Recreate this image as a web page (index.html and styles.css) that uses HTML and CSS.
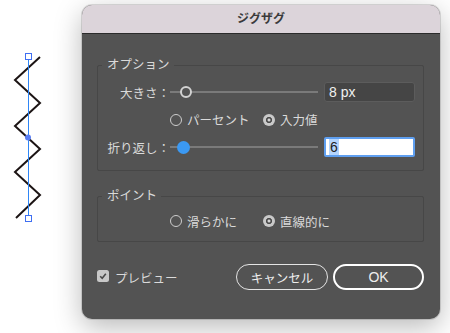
FILE: index.html
```html
<!DOCTYPE html>
<html lang="ja">
<head>
    <meta charset="UTF-8">
    <title>ジグザグ</title>
    <link rel="stylesheet" href="styles.css">
</head>
<body>
<div class="stage">

    <!-- artwork being edited: zigzag path with its selection handles -->
    <svg class="artwork" width="82" height="333" viewBox="0 0 82 333">
        <polyline points="40,57 15,80 40,103 15,126 40,149 15,172 40,195 16,218"
                  fill="none" stroke="#1c1414" stroke-width="2"/>
        <line x1="28.5" y1="59" x2="28.5" y2="216" stroke="#2f86f6" stroke-width="1"/>
        <rect x="25.5" y="53.5" width="6" height="6" fill="#fff" stroke="#3f6ff2"/>
        <rect x="25.5" y="215.5" width="6" height="6" fill="#fff" stroke="#3f6ff2"/>
        <circle cx="28" cy="137.5" r="3" fill="#5b7ff4"/>
    </svg>

    <div class="dialog">
        <div class="titlebar">ジグザグ</div>

        <div class="dialog-body">
            <fieldset class="group">
                <legend>オプション</legend>
                <div class="rows">
                    <div class="row">
                        <span class="label">大きさ：</span>
                        <div class="slider"><span class="knob hollow"></span></div>
                        <div class="field">8 px</div>
                    </div>
                    <div class="row radios">
                        <label class="radio"><span class="dot"></span>パーセント</label>
                        <label class="radio"><span class="dot checked"></span>入力値</label>
                    </div>
                    <div class="row">
                        <span class="label">折り返し：</span>
                        <div class="slider"><span class="knob active"></span></div>
                        <div class="field focused"><span class="selected">6</span></div>
                    </div>
                </div>
            </fieldset>

            <fieldset class="group points">
                <legend>ポイント</legend>
                <div class="row radios">
                    <label class="radio"><span class="dot"></span>滑らかに</label>
                    <label class="radio"><span class="dot checked"></span>直線的に</label>
                </div>
            </fieldset>

            <div class="footer">
                <label class="check">
                    <span class="box">
                        <svg width="12" height="12" viewBox="0 0 12 12">
                            <polyline points="3.2,6.2 5.2,8.2 8.8,3.8" fill="none" stroke="#4a4a4a" stroke-width="1.6"/>
                        </svg>
                    </span>
                    プレビュー
                </label>
                <div class="buttons">
                    <button class="btn">キャンセル</button>
                    <button class="btn primary">OK</button>
                </div>
            </div>
        </div>
    </div>
</div>
</body>
</html>
```

FILE: styles.css
```css
* {
    box-sizing: border-box;
}

body {
    margin: 0;
    background: #fff;
    font-family: "Liberation Sans", "Noto Sans CJK JP", sans-serif;
    font-size: 12.5px;
    color: #dadada;
    overflow: hidden;
}

.stage {
    display: flex;
    align-items: flex-start;
    width: 450px;
    height: 333px;
}

.artwork {
    display: block;
    flex: none;
}

.dialog {
    margin-top: 5px;
    width: 358px;
    border-radius: 10px;
    background: #535353;
    box-shadow: 0 0 0 1px rgba(0, 0, 0, 0.12), 0 8px 28px rgba(0, 0, 0, 0.28);
    overflow: hidden;
}

.titlebar {
    height: 29px;
    background: #dcd4da;
    border-bottom: 1px solid #2b2b2b;
    text-align: center;
    font-size: 12px;
    font-weight: bold;
    line-height: 28px;
    color: #3a3a3a;
}

.dialog-body {
    padding: 23px 16px 29px 15px;
}

.group {
    margin: 0;
    min-width: 0;
    padding: 9px 8px 13px 0;
    border: 1px solid #474747;
    border-radius: 2px;
}

.group legend {
    margin-left: 4px;
    padding: 0 4px 0 5px;
    line-height: 16px;
}

.group.points {
    margin-top: 17px;
    padding: 7px 8px 10px 0;
}

.rows {
    display: flex;
    flex-direction: column;
    gap: 7.5px;
}

.row {
    display: flex;
    align-items: center;
    height: 20px;
}

.label {
    width: 72px;
    text-align: right;
    white-space: nowrap;
}

.slider {
    position: relative;
    width: 148px;
    height: 20px;
}

.slider::before {
    content: "";
    position: absolute;
    left: 0;
    right: 0;
    top: 9px;
    height: 2px;
    background: #7a7a7a;
}

.knob {
    position: absolute;
    border-radius: 50%;
}

.knob.hollow {
    left: 10px;
    top: 4px;
    width: 12px;
    height: 12px;
    border: 2px solid #d2d2d2;
    background: #535353;
}

.knob.active {
    left: 6.5px;
    top: 3.5px;
    width: 13px;
    height: 13px;
    background: #3b99f3;
}

.field {
    margin-left: 6px;
    width: 91px;
    height: 20px;
    padding-left: 4px;
    border: 1px solid #5c5c5c;
    border-radius: 3px;
    background: #454545;
    font-size: 14px;
    line-height: 18px;
    color: #f0f0f0;
}

.field.focused {
    padding-left: 3px;
    border: 2px solid #5f9ff0;
    border-radius: 2px;
    background: #fff;
    line-height: 16px;
    color: #222;
}

.selected {
    display: inline-block;
    padding: 0 1px;
    background: #b4d5fe;
}

.radios {
    padding-left: 72px;
}

.radio {
    display: flex;
    align-items: center;
    gap: 5px;
    width: 93px;
    white-space: nowrap;
}

.dot {
    flex: none;
    width: 12px;
    height: 12px;
    border: 1.3px solid #cdcdcd;
    border-radius: 50%;
}

.dot.checked {
    border: none;
    background: radial-gradient(circle, #d4d4d4 0 1.2px, #4a4a4a 1.8px 2.8px, #c9c9c9 3.3px);
}

.footer {
    display: flex;
    align-items: center;
    margin-top: 22px;
    height: 26px;
}

.check {
    display: flex;
    align-items: center;
    gap: 6px;
}

.box {
    display: block;
    width: 12px;
    height: 12px;
    margin-bottom: 3px;
    border-radius: 2.5px;
    background: #c8c8c8;
}

.box svg {
    display: block;
}

.buttons {
    display: flex;
    gap: 5px;
    margin-left: auto;
}

.btn {
    width: 92px;
    height: 26px;
    padding: 0;
    border: 1.3px solid #e4e4e4;
    border-radius: 13px;
    background: transparent;
    font-family: inherit;
    font-size: 12.5px;
    color: #eee;
}

.btn.primary {
    width: 91px;
    border: 2px solid #fff;
    font-size: 14px;
}
```
